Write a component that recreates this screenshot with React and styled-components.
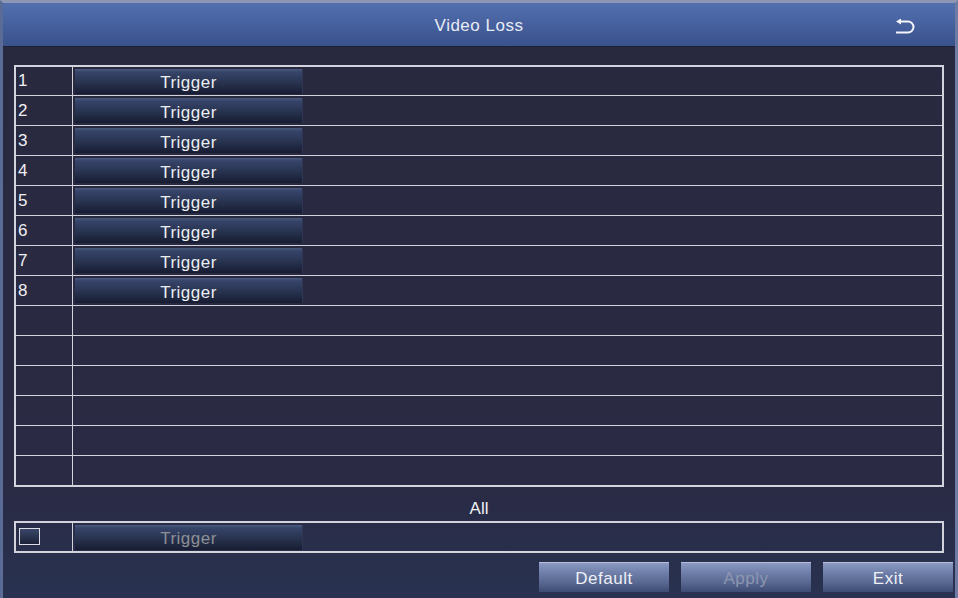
import React from "react";
import styled, { createGlobalStyle } from "styled-components";

const Global = createGlobalStyle`
  html, body { margin: 0; padding: 0; background: #29293f; }
  body { font-family: "Liberation Sans", Arial, sans-serif; }
  * { box-sizing: border-box; }
`;

const Window = styled.div`
  width: 958px;
  height: 598px;
  display: flex;
  flex-direction: column;
  border-top: 3px solid #8d97b3;
  border-left: 3px solid #5a6b96;
  border-right: 3px solid #6e7ca3;
  background: linear-gradient(180deg, #28283e 0%, #2a2a44 80%, #283250 100%);
  overflow: hidden;
`;

const Header = styled.div`
  position: relative;
  height: 44px;
  flex: none;
  display: flex;
  align-items: center;
  justify-content: center;
  padding-top: 2px;
  background: linear-gradient(180deg, #5270ae 0%, #4862a0 45%, #39528c 100%);
  border-bottom: 1px solid #1e2236;
  color: #e8ecf6;
  font-size: 17px;
  letter-spacing: 0.5px;
`;

const BackButton = styled.div`
  position: absolute;
  right: 40px;
  top: 15px;
  width: 20px;
  height: 16px;
  display: flex;
`;

const Content = styled.div`
  flex: 1;
  display: flex;
  flex-direction: column;
  padding: 18px 2px 0 11px;
`;

const Table = styled.div`
  width: 930px;
  border: 2px solid #d2d3dc;
  display: flex;
  flex-direction: column;
`;

const Row = styled.div`
  display: grid;
  grid-template-columns: 57px 1fr;
  height: ${(p) => (p.$first || p.$last ? 29 : 30)}px;
  border-bottom: ${(p) => (p.$last ? "none" : "1px solid #d2d3dc")};
`;

const NumCell = styled.div`
  border-right: 1px solid #d2d3dc;
  display: flex;
  align-items: center;
  padding-left: 2px;
  color: #f0f0f4;
  font-size: 17px;
`;

const MainCell = styled.div`
  display: flex;
  align-items: center;
  padding-left: 2px;
`;

const TriggerButton = styled.div`
  width: 228px;
  height: 25px;
  display: flex;
  align-items: center;
  justify-content: center;
  padding-top: 4px;
  background: linear-gradient(180deg, #4a5a7c 0%, #36446a 12%, #28334f 55%, #171c32 100%);
  border-right: 1px solid #2e3654;
  color: ${(p) => (p.$disabled ? "#8e9096" : "#eceef2")};
  font-size: 17px;
  letter-spacing: 0.5px;
`;

const AllLabel = styled.div`
  height: 20px;
  margin-top: 12px;
  margin-bottom: 2px;
  line-height: 20px;
  text-align: center;
  width: 930px;
  color: #eef0f4;
  font-size: 17px;
`;

const AllBox = styled.div`
  width: 930px;
  height: 32px;
  border: 2px solid #d2d3dc;
  display: grid;
  grid-template-columns: 57px 1fr;
`;

const CheckCell = styled.div`
  border-right: 1px solid #d2d3dc;
  display: flex;
  align-items: center;
  padding-left: 3px;
  padding-bottom: 2px;
`;

const CheckBox = styled.div`
  width: 21px;
  height: 17px;
  border: 1px solid #dcdde6;
  background: linear-gradient(180deg, #3a4768 0%, #1c2238 100%);
`;

const Footer = styled.div`
  display: flex;
  justify-content: flex-end;
  gap: 12px;
  margin-top: 9px;
`;

const FooterButton = styled.div`
  width: 130px;
  height: 30px;
  display: flex;
  align-items: center;
  justify-content: center;
  padding-top: 2px;
  border-top: 1px solid #b4bedc;
  background: linear-gradient(180deg, #8b99c2 0%, #6e7ea8 35%, #56668f 70%, #3e4c74 100%);
  color: ${(p) => (p.$disabled ? "#8d96b0" : "#eef0f6")};
  font-size: 17px;
  letter-spacing: 0.5px;
`;

function ReturnIcon() {
  return (
    <svg width="20" height="16" viewBox="0 0 20 16">
      <path
        d="M5 3.5 H13 A5.5 5.5 0 0 1 13 14.5 H1"
        fill="none"
        stroke="#f4f6fb"
        strokeWidth="2"
      />
      <path d="M1 3.5 L6 0.5 L6 6.5 Z" fill="#f4f6fb" />
    </svg>
  );
}

const channels = ["1", "2", "3", "4", "5", "6", "7", "8"];
const emptyRows = 6;

export default function App() {
  const rows = [
    ...channels.map((c) => ({ id: c, label: c, trigger: true })),
    ...Array.from({ length: emptyRows }, (_, i) => ({ id: `e${i}`, label: "", trigger: false })),
  ];

  return (
    <>
      <Global />
      <Window>
        <Header>
          Video Loss
          <BackButton>
            <ReturnIcon />
          </BackButton>
        </Header>
        <Content>
          <Table>
            {rows.map((r, i) => (
              <Row key={r.id} $first={i === 0} $last={i === rows.length - 1}>
                <NumCell>{r.label}</NumCell>
                <MainCell>{r.trigger && <TriggerButton>Trigger</TriggerButton>}</MainCell>
              </Row>
            ))}
          </Table>
          <AllLabel>All</AllLabel>
          <AllBox>
            <CheckCell>
              <CheckBox />
            </CheckCell>
            <MainCell>
              <TriggerButton $disabled>Trigger</TriggerButton>
            </MainCell>
          </AllBox>
          <Footer>
            <FooterButton>Default</FooterButton>
            <FooterButton $disabled>Apply</FooterButton>
            <FooterButton>Exit</FooterButton>
          </Footer>
        </Content>
      </Window>
    </>
  );
}
